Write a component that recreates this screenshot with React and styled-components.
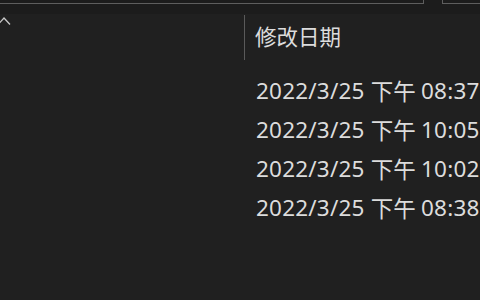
import React from "react";
import styled, { createGlobalStyle } from "styled-components";

const Global = createGlobalStyle`
  html, body { margin: 0; padding: 0; background: #202020; }
  body { width: 480px; height: 300px; overflow: hidden; }
`;

const Page = styled.div`
  width: 480px;
  height: 300px;
  background: #202020;
  font-family: "Noto Sans", "Noto Sans CJK TC", sans-serif;
  color: #dcdcdc;
  overflow: hidden;
`;

const TopBar = styled.div`
  height: 14px;
  background: #1c1c1c;
  display: flex;
  gap: 18px;
`;

const BoxBottom = styled.div`
  box-sizing: border-box;
  height: 4px;
  width: ${(p) => p.$w}px;
  flex: none;
  border-bottom: 1px solid #5e5e5e;
  ${(p) => (p.$side === "right" ? "border-right: 1px solid #5e5e5e;" : "border-left: 1px solid #5e5e5e;")}
`;

const Table = styled.div`
  display: grid;
  grid-template-columns: 244px 1fr;
`;

const HeaderLeft = styled.div`
  height: 47px;
  position: relative;
`;

const Chevron = styled.svg`
  position: absolute;
  left: -3px;
  top: 2px;
`;

const HeaderCell = styled.div`
  height: 47px;
  display: flex;
  align-items: center;
  padding-left: 11px;
  padding-bottom: 4px;
  box-sizing: border-box;
  font-size: 21.5px;
  position: relative;
  &::before {
    content: "";
    position: absolute;
    left: 0;
    top: 1px;
    height: 45px;
    width: 1px;
    background: #5a5a5a;
  }
`;

const Spacer = styled.div`
  grid-column: 1 / -1;
  height: 10px;
`;

const Empty = styled.div``;

const DateCell = styled.div`
  height: 39px;
  display: flex;
  align-items: center;
  padding-left: 12px;
  font-size: 22.5px;
  letter-spacing: 0.2px;
  white-space: nowrap;
`;

const Part = styled.span`
  margin-left: ${(p) => p.$gap || 0}px;
`;

const dates = [
  ["2022/3/25", "下午", "08:37"],
  ["2022/3/25", "下午", "10:05"],
  ["2022/3/25", "下午", "10:02"],
  ["2022/3/25", "下午", "08:38"],
];

export default function App() {
  return (
    <Page>
      <Global />
      <TopBar>
        <BoxBottom $w={424} $side="right" />
        <BoxBottom $w={60} $side="left" />
      </TopBar>
      <Table>
        <HeaderLeft>
          <Chevron width="16" height="10" viewBox="0 0 16 10">
            <path d="M1 8.5 L7 2 L13 8.5" fill="none" stroke="#c8c8c8" strokeWidth="1.3" />
          </Chevron>
        </HeaderLeft>
        <HeaderCell>修改日期</HeaderCell>
        <Spacer />
        {dates.map(([d, ap, t], i) => (
          <React.Fragment key={i}>
            <Empty />
            <DateCell>
              <Part>{d}</Part>
              <Part $gap={6}>{ap}</Part>
              <Part $gap={5}>{t}</Part>
            </DateCell>
          </React.Fragment>
        ))}
      </Table>
    </Page>
  );
}
